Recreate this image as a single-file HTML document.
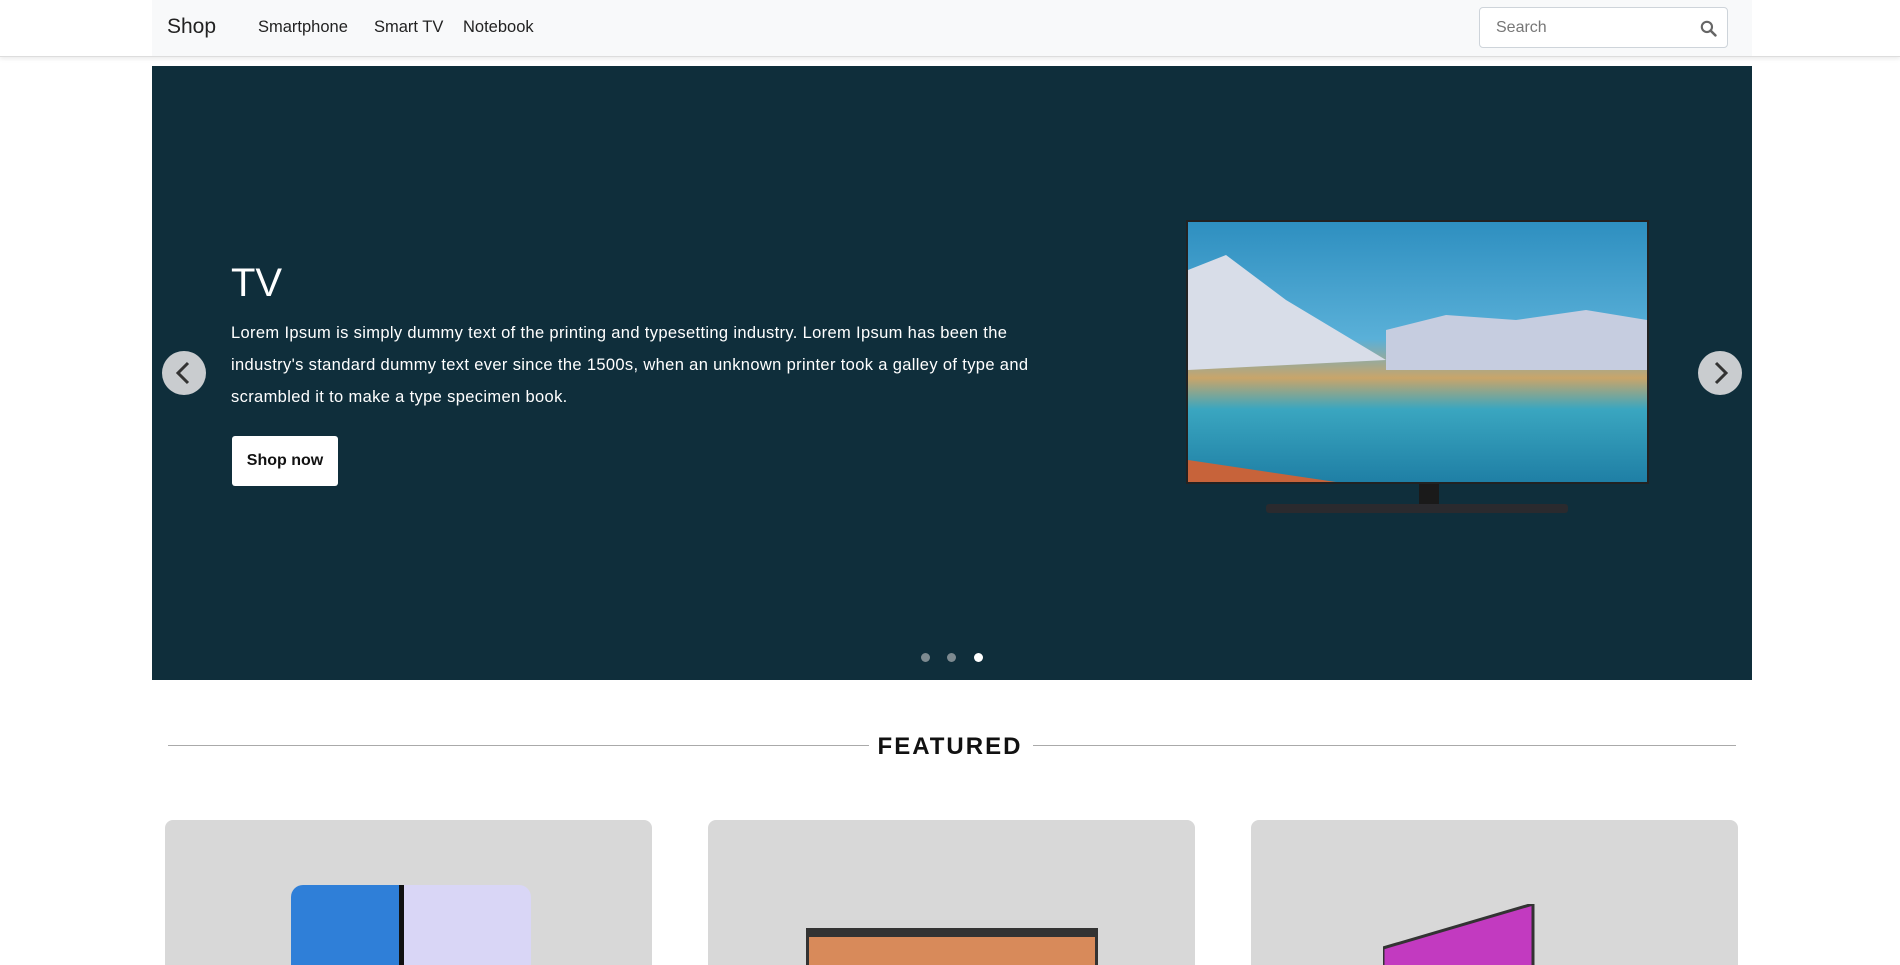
<!DOCTYPE html>
<html style="overflow:hidden;height:965px"><head><meta charset="utf-8"><style>
*{box-sizing:border-box;margin:0;padding:0}
body{width:1900px;height:965px;overflow:hidden;background:#fff;font-family:"Liberation Sans",sans-serif;position:relative}
.nav{position:absolute;left:0;top:0;width:1900px;height:57px;border-bottom:1px solid #ddd;box-shadow:0 2px 4px rgba(0,0,0,.08);background:#fff}
.navin{position:absolute;left:152px;width:1600px;top:0;height:56px;background:#f8f9fa}
.brand{position:absolute;left:15px;top:15px;font-size:21px;color:#222}
.link{position:absolute;top:18px;font-size:16.5px;color:#222}
.search{position:absolute;left:1327px;top:7px;width:249px;height:41px;border:1px solid #ced4da;border-radius:4px;background:#fff}
.search span{position:absolute;left:16px;top:11px;font-size:16px;color:#777}
.car{position:absolute;left:152px;top:66px;width:1600px;height:614px;background:#0f2e3b}
h1{position:absolute;left:79px;top:195px;font-size:40px;color:#fff;font-weight:normal}
.p{position:absolute;left:79px;top:251px;width:840px;font-size:16.5px;letter-spacing:0.35px;line-height:32px;color:#fff}
.btn{position:absolute;left:80px;top:370px;width:106px;height:50px;background:#fff;border-radius:3px;font-weight:bold;font-size:16px;text-align:center;line-height:50px;color:#111}
.arr{position:absolute;top:285px;width:44px;height:44px;border-radius:50%;background:#c9cccf}
.dot{position:absolute;top:587px;width:9px;height:9px;border-radius:50%;background:#7d8a90}
.feat{position:absolute;top:733px;left:0;width:1900px;text-align:center;font-size:24px;font-weight:bold;letter-spacing:2px;color:#111}
.line{position:absolute;top:745px;height:1px;background:#aaa}
.card{position:absolute;top:820px;width:487px;height:145px;background:#d8d8d8;border-radius:8px 8px 0 0;overflow:hidden}
</style></head><body>
<div class="nav"><div class="navin">
<div class="brand">Shop</div>
<div class="link" style="left:106px">Smartphone</div>
<div class="link" style="left:222px">Smart TV</div>
<div class="link" style="left:311px">Notebook</div>
<div class="search"><span>Search</span>
<svg style="position:absolute;right:10px;top:12px" width="17" height="17" viewBox="0 0 16 16"><circle cx="6.5" cy="6.5" r="4.8" fill="none" stroke="#666" stroke-width="2"/><path d="M10 10l4.5 4.5" stroke="#666" stroke-width="2.4" stroke-linecap="round"/></svg></div>
</div></div>
<div class="car">
<h1>TV</h1>
<div class="p">Lorem Ipsum is simply dummy text of the printing and typesetting industry. Lorem Ipsum has been the industry's standard dummy text ever since the 1500s, when an unknown printer took a galley of type and scrambled it to make a type specimen book.</div>
<div class="btn">Shop now</div>
<div class="arr" style="left:10px"><svg width="44" height="44"><path d="M26 12L16 22l10 10" fill="none" stroke="#333" stroke-width="3"/></svg></div>
<div class="arr" style="left:1546px"><svg width="44" height="44"><path d="M18 12l10 10-10 10" fill="none" stroke="#333" stroke-width="3"/></svg></div>
<svg style="position:absolute;left:1034px;top:154px" width="466" height="310">
<defs><linearGradient id="sky" x1="0" y1="0" x2="0" y2="1"><stop offset="0" stop-color="#2e8fc0"/><stop offset=".45" stop-color="#5ab0d8"/><stop offset=".6" stop-color="#c9a56a"/><stop offset=".72" stop-color="#3aa6c0"/><stop offset="1" stop-color="#1f7fa5"/></linearGradient></defs>
<rect x="0" y="0" width="463" height="264" fill="#222"/>
<rect x="2" y="2" width="459" height="260" fill="url(#sky)"/>
<path d="M2 50 L40 35 L100 80 L200 140 L2 150Z" fill="#d8dde8"/>
<path d="M200 110 L260 95 L330 100 L400 90 L461 100 L461 150 L200 150Z" fill="#c6cde0"/>
<path d="M2 240 L2 262 L150 262Z" fill="#c7633a"/>
<rect x="233" y="264" width="20" height="20" fill="#1a1a1a"/>
<rect x="80" y="284" width="302" height="9" rx="3" fill="#2a2a2e"/>
</svg>
<div class="dot" style="left:769px"></div><div class="dot" style="left:795px"></div><div class="dot" style="left:822px;background:#fff"></div>
</div>
<div class="line" style="left:168px;width:701px"></div>
<div class="line" style="left:1033px;width:703px"></div>
<div class="feat">FEATURED</div>
<div class="card" style="left:165px"><div style="position:absolute;left:126px;top:65px;width:240px;height:100px;background:linear-gradient(90deg,#2f7fd8 0 45%,#111 45% 47%,#d9d6f6 47%);border-radius:12px 12px 0 0"></div></div>
<div class="card" style="left:708px"><div style="position:absolute;left:98px;top:108px;width:292px;height:60px;background:linear-gradient(#333 0 6px,#d88a5a 6px);border:3px solid #333"></div></div>
<div class="card" style="left:1251px"><svg style="position:absolute;left:132px;top:84px" width="160" height="80"><path d="M0 44 L150 0 L150 80 L0 80Z" fill="#c23ac0" stroke="#333" stroke-width="3"/></svg></div>
</body></html>
